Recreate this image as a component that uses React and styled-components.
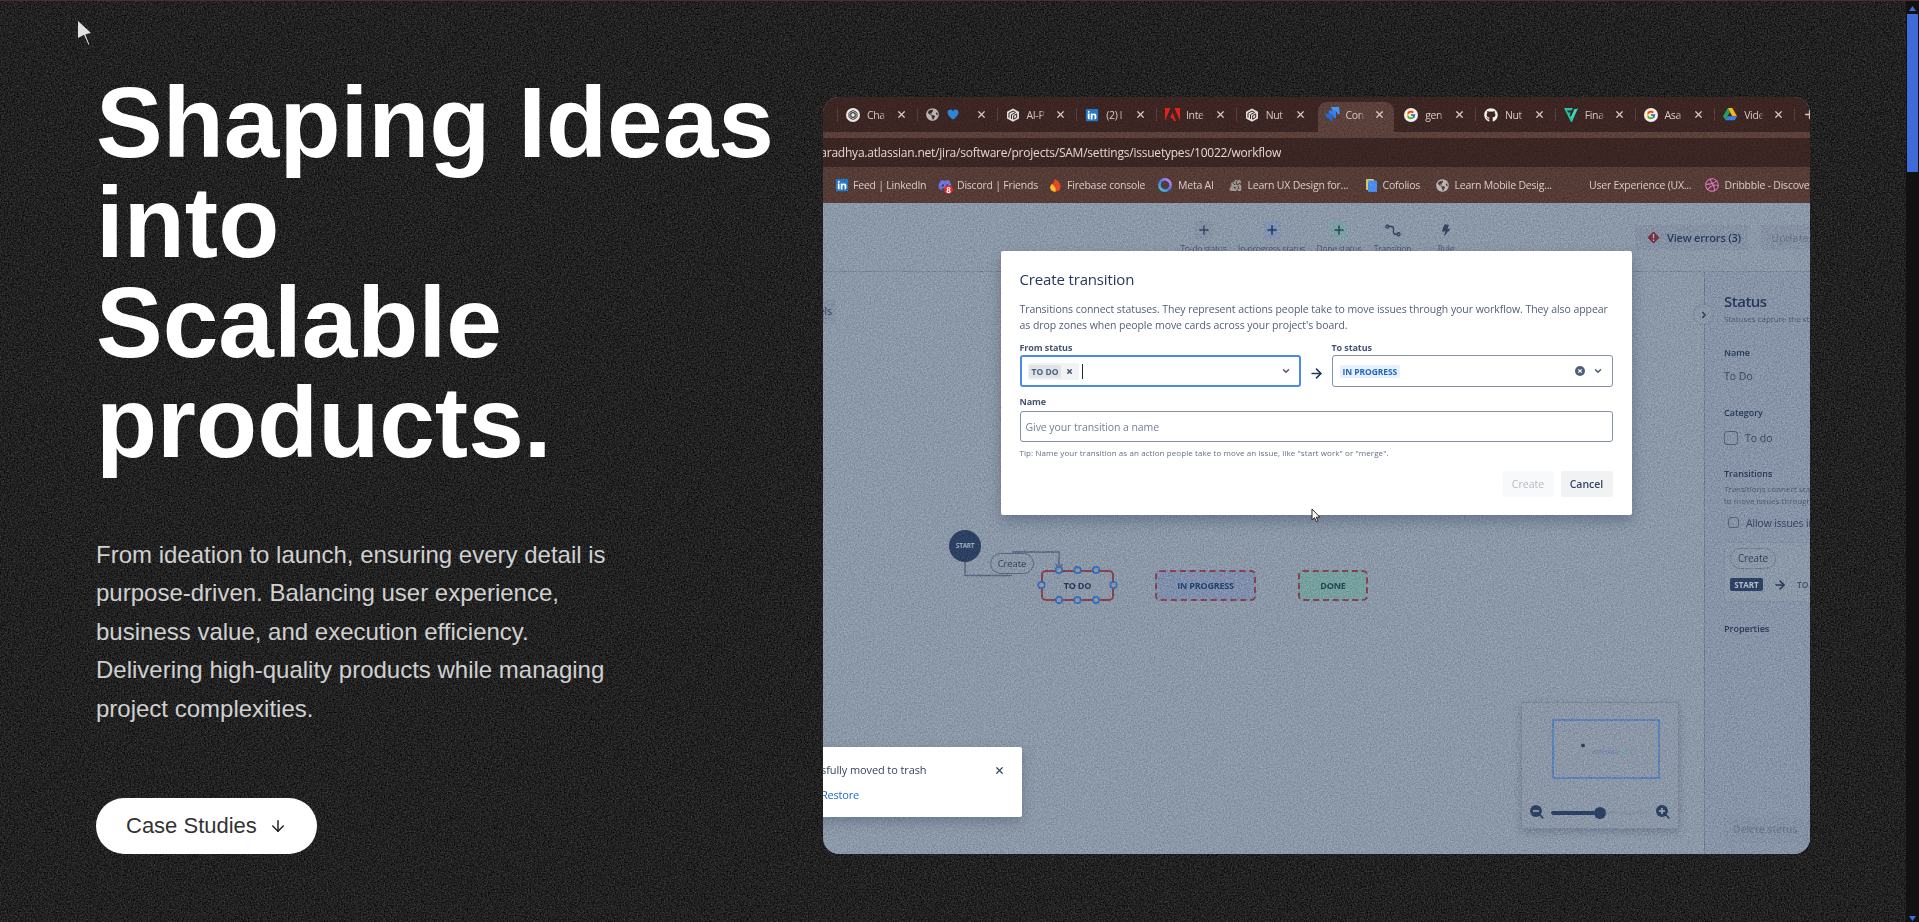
import React from "react";
import styled, { createGlobalStyle, css } from "styled-components";
import { FaLinkedin, FaGithub, FaGlobeAmericas, FaDribbble, FaDiscord } from "react-icons/fa";
import { FcGoogle } from "react-icons/fc";
import { ArrowDown, ArrowRight, ChevronDown, ChevronRight, X, Plus } from "lucide-react";

const GlobalStyle = createGlobalStyle`
  *, *::before, *::after { box-sizing: border-box; }
  body { margin: 0; background: #1f1f1f; overflow: hidden; }
  p, h1, h2, h3 { margin: 0; }
  svg { display: block; flex: none; }
`;

const ui = `"Open Sans", "Noto Sans", sans-serif`;

/* ---------- page ---------- */

const Page = styled.div`
  position: relative;
  display: flex;
  width: 100vw;
  height: 922px;
  background: #1f1f1f;
  font-family: "Liberation Sans", Arial, sans-serif;
`;

const Hero = styled.main`
  position: relative;
  isolation: isolate;
  flex: 1;
  display: flex;
  padding: 70px 0 0 96px;
  background: #1f1f1f;
  border-top: 1px solid #4a2e2b;
`;

const Copy = styled.section`
  width: 727px;
  display: flex;
  flex-direction: column;
  align-items: flex-start;
`;

const Heading = styled.h1`
  padding-top: 1px;
  font-size: 100px;
  line-height: 100px;
  font-weight: 700;
  color: #fff;
  white-space: nowrap;
`;

const Lead = styled.p`
  margin-top: 64px;
  font-size: 24px;
  line-height: 38.4px;
  color: #d0d0d0;
  white-space: nowrap;
`;

const CaseButton = styled.a`
  margin-top: 70px;
  display: flex;
  align-items: center;
  gap: 12px;
  width: 221px;
  height: 56px;
  padding-left: 30px;
  border-radius: 28px;
  background: #fff;
  color: #333;
  font-size: 22px;
`;

const GrainLayer = styled.svg`
  position: absolute;
  inset: 0;
  z-index: ${(p) => (p.$blend ? "auto" : -1)};
  width: 100%;
  height: 100%;
  mix-blend-mode: ${(p) => p.$blend || "normal"};
  opacity: ${(p) => p.$opacity};
  pointer-events: none;
`;

const Pointer = styled.svg`
  position: absolute;
  left: ${(p) => p.$x}px;
  top: ${(p) => p.$y}px;
`;

const Scrollbar = styled.aside`
  width: 13px;
  height: 922px;
  background: #111;
  border-top: 1px solid #4a2e2b;
  display: flex;
  flex-direction: column;
  align-items: center;
`;

const ScrollArrow = styled.svg`
  width: 7px;
  height: 5px;
  margin: ${(p) => (p.$end ? "auto 0 1px" : "5px 0 3px")};
`;

const Thumb = styled.div`
  width: 11px;
  height: 158px;
  background: #3f6bd8;
`;

/* ---------- showcase frame ---------- */

const Frame = styled.section`
  position: relative;
  isolation: isolate;
  width: 987px;
  height: 757px;
  margin-top: 26px;
  border-radius: 16px;
  overflow: hidden;
  display: flex;
  flex-direction: column;
  background: #8b98a8;
  font-family: ${ui};
`;

const TabBar = styled.div`
  display: flex;
  height: 35px;
  flex: none;
  padding-left: 14px;
  background: #3b2522;
`;

const TabItem = styled.div`
  position: relative;
  flex: none;
  width: 79.75px;
  display: flex;
  align-items: center;
  padding: 0 10px 0 9px;
  color: #dcc9c5;
  font-size: 10.5px;
  ${(p) =>
    p.$active &&
    css`
      margin-top: 5px;
      padding-bottom: 5px;
      &::after {
        content: "";
        position: absolute;
        z-index: 0;
        inset: 0 1px 0 2px;
        background: #5a403b;
        border-radius: 9px 9px 0 0;
      }
    `}
  &::before {
    content: "";
    position: absolute;
    left: 0;
    top: 11px;
    width: 1px;
    height: 13px;
    background: ${(p) => (p.$divider ? "#5a403c" : "transparent")};
  }
  & > * { position: relative; z-index: 1; }
`;

const TabIcon = styled.span`
  width: 21px;
  display: flex;
`;

const TabTitle = styled.span`
  width: 20px;
  margin-right: 9px;
  overflow: hidden;
  white-space: nowrap;
  letter-spacing: -0.3px;
  -webkit-mask-image: linear-gradient(90deg, #000 70%, transparent);
  mask-image: linear-gradient(90deg, #000 70%, transparent);
`;

const AddressBar = styled.div`
  height: 35px;
  flex: none;
  border-top: 6px solid #5a403b;
  background: #3b2522;
  width: 100%;
  display: flex;
  align-items: center;
`;

const Address = styled.div`
  width: 458px;
  display: flex;
  justify-content: flex-end;
  overflow: hidden;
  white-space: nowrap;
  font-size: 12px;
  letter-spacing: -0.22px;
  color: #e3d6d3;
  padding-top: 6px;
  height: 29px;
`;

const Bookmarks = styled.div`
  height: 36px;
  flex: none;
  display: flex;
  align-items: center;
  padding-left: 12px;
  background: #553b36;
  overflow: hidden;
`;

const Bookmark = styled.div`
  flex: none;
  width: ${(p) => p.$w}px;
  display: flex;
  align-items: center;
  color: #dacbc8;
  font-size: 10.5px;
  letter-spacing: ${(p) => p.$ls ?? -0.22}px;
  white-space: nowrap;
`;

const BookmarkIcon = styled.span`
  position: relative;
  width: ${(p) => p.$w}px;
  display: flex;
`;

const NoticeDot = styled.i`
  position: absolute;
  right: 4px;
  bottom: -2px;
  width: 9px;
  height: 9px;
  border-radius: 5px;
  background: #d32f2f;
  color: #fff;
  font: 700 8px/9px ${ui};
  text-align: center;
`;

/* ---------- workflow editor ---------- */

const Editor = styled.div`
  position: relative;
  flex: 1;
  display: flex;
  flex-direction: column;
  min-height: 0;
`;

const Toolbar = styled.div`
  position: relative;
  height: 69px;
  flex: none;
  border-bottom: 1px solid #7a8798;
  display: flex;
  padding-top: 18px;
  overflow: hidden;
`;

const Tools = styled.div`
  flex: none;
  display: flex;
  gap: 10px;
  margin-left: 357px;
  width: 455px;
`;

const Tool = styled.div`
  flex: none;
  width: ${(p) => p.$w}px;
  display: flex;
  flex-direction: column;
  align-items: center;
  gap: 4px;
  font-size: 8.5px;
  line-height: 12px;
  letter-spacing: -0.25px;
  white-space: nowrap;
  color: #4a5874;
`;

const ToolIcon = styled.span`
  display: grid;
  place-items: center;
  width: 18px;
  height: 18px;
  border-radius: 3px;
  background: ${(p) => p.$bg || "transparent"};
  color: ${(p) => p.$color || "#34435f"};
`;

const ToolbarButton = styled.div`
  flex: none;
  margin-top: 4px;
  width: ${(p) => p.$w}px;
  height: 25px;
  margin-right: 13px;
  padding-left: ${(p) => p.$pad}px;
  display: flex;
  align-items: center;
  gap: 7px;
  border-radius: 2px;
  background: #8591a3;
  color: ${(p) => (p.$muted ? "#6c788c" : "#253858")};
  font-size: 11px;
  font-weight: 600;
  letter-spacing: -0.2px;
  white-space: nowrap;
`;

const Workspace = styled.div`
  flex: 1;
  display: flex;
  min-height: 0;
`;

const Canvas = styled.div`
  position: relative;
  flex: 1;
`;

const LabelsButton = styled.div`
  position: absolute;
  left: -30px;
  top: 27px;
  width: 43px;
  height: 25px;
  padding-right: 4px;
  border-radius: 2px;
  background: #8591a3;
  color: #34435f;
  font-size: 10.5px;
  line-height: 24px;
  text-align: right;
`;

const Edges = styled.svg`
  position: absolute;
  left: 0;
  top: 0;
`;

const Node = styled.div`
  position: absolute;
  left: ${(p) => p.$x}px;
  top: ${(p) => p.$y}px;
  width: ${(p) => p.$w}px;
  height: 31px;
  border: 2px ${(p) => (p.$selected ? "solid" : "dashed")} #86414c;
  border-radius: 5px;
  background: ${(p) => p.$bg || "transparent"};
  color: ${(p) => p.$color || "#253858"};
  display: grid;
  place-items: center;
  font-size: 9px;
  font-weight: 700;
  letter-spacing: -0.2px;
`;

const StartNode = styled.div`
  position: absolute;
  left: 126px;
  top: 257.5px;
  width: 32px;
  height: 32px;
  border-radius: 50%;
  background: #2c4062;
  color: #b3bfce;
  display: grid;
  place-items: center;
  font-size: 6.5px;
  font-weight: 600;
  letter-spacing: -0.2px;
`;

const Pill = styled.div`
  width: ${(p) => p.$w}px;
  height: ${(p) => p.$h}px;
  border: ${(p) => p.$b}px solid ${(p) => p.$line};
  border-radius: 11px;
  display: grid;
  place-items: center;
  font-size: ${(p) => p.$size}px;
  letter-spacing: -0.1px;
  color: #2f3f5c;
  background: #8b98a8;
`;

const PillNode = styled(Pill)`
  position: absolute;
  left: 167px;
  top: 281px;
`;

const Minimap = styled.div`
  position: absolute;
  left: 698px;
  top: 430px;
  width: 158px;
  height: 127px;
  background: #8b97a7;
  border: 1px solid #7a8799;
  box-shadow: 0 3px 7px rgba(60, 75, 100, 0.35);
  display: flex;
  flex-direction: column;
  padding: 16px 8px 9px 30px;
`;

const Viewport = styled.div`
  width: 108px;
  height: 60px;
  border: 2px solid #5a82b8;
`;

const ZoomRow = styled.div`
  display: flex;
  align-items: center;
  margin: 26px 0 0 -22px;
`;

const Slider = styled.div`
  width: 98px;
  height: 4px;
  margin: 1px 7px 0;
  border-radius: 2px;
  background: linear-gradient(90deg, #2c4062 50%, #8592a3 50%);
  display: flex;
  align-items: center;
  justify-content: center;
  &::after {
    content: "";
    width: 12px;
    height: 12px;
    border-radius: 50%;
    background: #2c4062;
  }
`;

/* ---------- status panel ---------- */

const Panel = styled.div`
  position: relative;
  width: 106px;
  flex: none;
  border-left: 1px solid #6f7c92;
  background: #8793a7;
  padding: 17px 0 11px 19px;
  display: flex;
  flex-direction: column;
  align-items: flex-start;
  color: #253858;
  white-space: nowrap;
`;

const Collapse = styled.div`
  position: absolute;
  left: -12px;
  top: 32px;
  width: 21px;
  height: 21px;
  border-radius: 50%;
  border: 1px solid #78859a;
  background: #8b98a8;
  display: grid;
  place-items: center;
`;

const PanelTitle = styled.h2`
  font-size: 15px;
  line-height: 24px;
  font-weight: 600;
  letter-spacing: -0.5px;
`;

const PanelNote = styled.p`
  margin-top: ${(p) => p.$mt || 0}px;
  font-size: 8px;
  line-height: 12.5px;
  color: #4c5a74;
`;

const PanelLabel = styled.h3`
  margin-top: ${(p) => p.$mt}px;
  font-size: 9px;
  line-height: 14px;
  font-weight: 600;
`;

const PanelValue = styled.div`
  margin-top: ${(p) => p.$mt}px;
  padding-left: ${(p) => p.$pl || 0}px;
  display: flex;
  align-items: center;
  gap: 7px;
  font-size: 10.5px;
  line-height: 16px;
  letter-spacing: ${(p) => p.$ls || 0}px;
  color: #34435f;
`;

const Checkbox = styled.span`
  width: ${(p) => p.$s}px;
  height: ${(p) => p.$s}px;
  border: 1px solid #526078;
  border-radius: 3px;
`;

const TransitionCard = styled.div`
  margin-top: 11px;
  width: 110px;
  height: 60px;
  flex: none;
  padding: 5px 0 0 5px;
  border: 1px solid #7f8ca0;
  border-right: 0;
  border-radius: 3px;
  background: #8b98a8;
`;

const TransitionRow = styled.div`
  display: flex;
  align-items: center;
  gap: 10px;
  margin-top: 9px;
  color: #253858;
`;

const StartChip = styled.span`
  width: 33px;
  height: 13px;
  border-radius: 2px;
  background: #2c4062;
  color: #b3bfce;
  font-size: 8px;
  line-height: 13px;
  font-weight: 700;
  text-align: center;
`;

const TodoChip = styled.span`
  font-size: 8.5px;
  font-weight: 600;
  color: #3f4d68;
`;

const DeleteButton = styled.div`
  margin-top: auto;
  width: 90px;
  height: 26px;
  padding-left: 9px;
  border-radius: 2px;
  background: #8490a3;
  color: #6c788c;
  font-size: 10.5px;
  font-weight: 600;
  line-height: 25px;
  letter-spacing: -0.2px;
`;

/* ---------- overlays ---------- */

const Toast = styled.div`
  position: absolute;
  left: -40px;
  top: 650px;
  width: 238.5px;
  height: 70px;
  padding: 14px 17px 0 38px;
  border-radius: 2px;
  background: #fff;
  box-shadow: 0 5px 12px rgba(50, 65, 95, 0.35);
  font-size: 11px;
  line-height: 18px;
  letter-spacing: -0.1px;
  color: #344563;
  white-space: nowrap;
`;

const ToastRow = styled.div`
  display: flex;
  align-items: center;
  justify-content: space-between;
`;

const ToastAction = styled.div`
  margin-top: 7px;
  color: #1c69c9;
  letter-spacing: -0.2px;
  font-weight: 500;
`;

const Dialog = styled.div`
  position: absolute;
  left: 177.5px;
  top: 154px;
  width: 631px;
  height: 264px;
  padding: 16px 19px 18px;
  border-radius: 2px;
  background: #fff;
  box-shadow: 0 6px 14px rgba(50, 65, 95, 0.4);
  display: flex;
  flex-direction: column;
  color: #505f79;
  white-space: nowrap;
`;

const DialogTitle = styled.h2`
  font-size: 15px;
  line-height: 24px;
  font-weight: 500;
  letter-spacing: -0.15px;
  color: #253858;
`;

const DialogText = styled.p`
  margin-top: 11px;
  font-size: 10.5px;
  line-height: 15.7px;
  letter-spacing: -0.06px;
`;

const FieldLabel = styled.div`
  margin-top: ${(p) => p.$mt || 0}px;
  font-size: 9px;
  line-height: 14px;
  font-weight: 700;
  letter-spacing: -0.1px;
  color: #44546f;
`;

const StatusFields = styled.div`
  display: flex;
  align-items: flex-end;
  margin-top: 8px;
`;

const Field = styled.div`
  width: 281px;
`;

const Between = styled.div`
  width: 31px;
  height: 25px;
  display: flex;
  justify-content: center;
  color: #253858;
  align-self: flex-end;
  padding-top: 4px;
`;

const Select = styled.div`
  margin-top: 0;
  height: 32px;
  padding: 0 ${(p) => (p.$focused ? 8 : 9)}px 0 ${(p) => (p.$focused ? 6 : 7)}px;
  border: ${(p) => (p.$focused ? "2px solid #4a8be6" : "1px solid #8590a2")};
  border-radius: 3px;
  display: flex;
  align-items: center;
  color: #44546f;
`;

const Tag = styled.span`
  display: flex;
  align-items: center;
  height: 17px;
  width: 51px;
  border-radius: 2px;
  background: #f1f2f4;
  gap: 5px;
  padding-left: 1px;
`;

const Lozenge = styled.span`
  height: 13px;
  padding: 0 3px;
  border-radius: 2px;
  background: ${(p) => (p.$blue ? "#e6f1fd" : "#e0e3e8")};
  color: ${(p) => (p.$blue ? "#2267c4" : "#505f79")};
  font-size: 8.5px;
  line-height: 13px;
  font-weight: 700;
  letter-spacing: ${(p) => (p.$blue ? -0.08 : 0)}px;
`;

const Caret = styled.i`
  width: 1.5px;
  height: 15px;
  margin-left: 3px;
  background: #172b4d;
`;

const SelectIcons = styled.span`
  margin-left: auto;
  display: flex;
  align-items: center;
  gap: 8px;
`;

const TextInput = styled.div`
  margin-top: 2px;
  height: 31px;
  padding-left: 5px;
  border: 1px solid #8590a2;
  border-radius: 3px;
  font-size: 10.5px;
  line-height: 30px;
  letter-spacing: -0.07px;
  color: #758195;
`;

const Tip = styled.p`
  margin-top: 4px;
  font-size: 8px;
  line-height: 13px;
  letter-spacing: 0.09px;
  color: #626f86;
`;

const Actions = styled.div`
  margin-top: auto;
  display: flex;
  justify-content: flex-end;
  gap: 7px;
`;

const ActionButton = styled.div`
  width: ${(p) => (p.$disabled ? 51 : 52)}px;
  height: 26px;
  border-radius: 2px;
  background: ${(p) => (p.$disabled ? "#f8f9fa" : "#f1f2f4")};
  color: ${(p) => (p.$disabled ? "#b3b9c4" : "#344563")};
  display: grid;
  place-items: center;
  font-size: 10.5px;
  font-weight: ${(p) => (p.$disabled ? 400 : 600)};
`;

/* ---------- icons ---------- */

const Knot = () => (
  <svg width="14" height="14" viewBox="0 0 14 14">
    <circle cx="7" cy="7" r="7" fill="#ece7e6" />
    <g fill="none" stroke="#353535" strokeWidth=".8">
      {[0, 60, 120].map((a) => (
        <rect key={a} x="4.9" y="2.5" width="4.2" height="9" rx="2.1" transform={`rotate(${a} 7 7)`} />
      ))}
    </g>
  </svg>
);

const Cube = () => (
  <svg width="14" height="14" viewBox="0 0 14 14">
    <path d="M7 .5 13 3.8v6.6L7 13.7 1 10.4V3.8z" fill="#e4dedd" />
    <path d="M3 5.2 7 3l2.5 1.4L5.5 6.7v4.2M7.7 7.6l3-1.7v3.5l-3 1.8zM3 5.2v4.5" fill="none" stroke="#3b2522" strokeWidth="1" />
  </svg>
);

const InMark = styled(FaLinkedin)`
  background: radial-gradient(#fff 55%, transparent 60%);
  color: #2478c8;
`;

const LinkedIn = () => <InMark size={14} />;

const Globe = () => <FaGlobeAmericas size={13} color="#b9b5b4" />;

const Heart = () => (
  <svg width="12" height="11" viewBox="0 0 12 11">
    <path d="M6 10.5C2 7.5.6 5.4.6 3.4.6 1.7 1.8.6 3.2.6 4.4.6 5.4 1.2 6 2.3 6.600 1.200 7.600.600 8.800.600c1.400 0 2.600 1.100 2.600 2.800C11.400 5.400 10 7.500 6 10.500z" fill="#2b86d8" />
  </svg>
);

const Adobe = () => (
  <svg width="15" height="13" viewBox="0 0 15 13">
    <path d="M0 0h5.5L0 13zM15 0H9.5L15 13zM7.5 4.6 11 13H8.7l-1-2.7H5.1z" fill="#e3201b" />
  </svg>
);

const Jira = () => (
  <svg width="15" height="15" viewBox="0 0 15 15">
    <path d="M7 0h8v8c-2 0-2.8-1.2-2.8-2.7C9 5.3 8 3.5 7 0z" fill="#4a93f5" transform="rotate(-8 8 8)" />
    <path d="M3.5 3.5h7.5v7.8c-2 0-2.7-1.300-2.700-2.800C5 8.500 4 7 3.500 3.500z" fill="#347fe8" />
    <path d="M0 6.8h7.5v7.5c-2 0-2.7-1.200-2.700-2.700C1.600 11.600.6 10 0 6.800z" fill="#2468d2" />
  </svg>
);

const GoogleMark = () => (
  <svg width="14" height="14" viewBox="0 0 14 14">
    <circle cx="7" cy="7" r="7" fill="#f3efee" />
    <g transform="translate(2 2)">
      <FcGoogle size={10} />
    </g>
  </svg>
);

const Finch = () => (
  <svg width="14" height="14" viewBox="0 0 14 14">
    <path d="M0 0h9L7.6 2.5H3l1 2h2.7L5.6 7l2.2 4L13.5 0H14L8 14H7z" fill="#27c2a8" />
    <path d="M10.5 1h3L8 12l-1.3-2.7z" fill="#36d9bd" />
  </svg>
);

const Drive = () => (
  <svg width="14" height="13" viewBox="0 0 14 13">
    <path d="M4.7 0h4.6l4.7 8.2H9.3z" fill="#f2b91c" />
    <path d="M4.7 0 7 4 2.4 12 0 8.2z" fill="#21a25a" />
    <path d="M4.6 8.2H14L11.7 12.2H2.4z" fill="#3f7de8" />
  </svg>
);

const Flame = () => (
  <svg width="11" height="13" viewBox="0 0 11 13">
    <path d="M5 0c3 2 6 4.5 5.6 8.3C10.3 11 8.3 12.6 5.8 12.8 2 12.8 0 10.7.4 7.4L2 4l1.5 1.2C3.6 3 4 1.5 5 0z" fill="#e14a1f" />
    <path d="M2 4.8 5 8.5c1.2 2 .8 3.4.2 4.2C2 12.5 0 10.7.4 7.7z" fill="#f7c22b" />
  </svg>
);

const MetaRing = () => (
  <svg width="14" height="14" viewBox="0 0 14 14">
    <defs>
      <linearGradient id="ring" x1="1" y1="0" x2="0" y2="1">
        <stop offset="0" stopColor="#d98be8" />
        <stop offset=".5" stopColor="#4a6df0" />
        <stop offset="1" stopColor="#42d7d0" />
      </linearGradient>
    </defs>
    <circle cx="7" cy="7" r="5.6" fill="none" stroke="url(#ring)" strokeWidth="2.6" />
  </svg>
);

const Sketchy = () => (
  <svg width="13" height="12" viewBox="0 0 13 12">
    <path d="M0 11 2.5 6 2 4l3-1 1-2 3 .5 2-1L12 3l-1 2 1.5 2-.5 5H9l-.5-2L7 12H3z" fill="#9c9693" />
    <path d="M4 4l2 2M7 2l1 4 3-2M4 8l3 1M9 7l1 3" stroke="#4b3b38" fill="none" />
  </svg>
);

const Folio = () => (
  <svg width="11" height="13" viewBox="0 0 11 13">
    <rect width="8" height="11" rx="1" fill="#d9c36a" />
    <rect x="2" y="1.5" width="9" height="11.5" rx="1" fill="#4b8df0" />
  </svg>
);

const ClearIcon = () => (
  <svg width="10" height="10" viewBox="0 0 10 10">
    <circle cx="5" cy="5" r="5" fill="#505f79" />
    <path d="M3.3 3.3l3.4 3.4M6.7 3.3 3.3 6.7" stroke="#fff" strokeWidth="1.2" />
  </svg>
);

const ErrorIcon = () => (
  <svg width="13" height="13" viewBox="0 0 13 13">
    <rect x="2.1" y="2.1" width="8.8" height="8.8" rx="1.2" transform="rotate(45 6.5 6.5)" fill="#762f40" />
    <path d="M6.5 3v4.3M6.5 8.5V10" stroke="#b0b8c6" strokeWidth="1.4" />
  </svg>
);

const Connector = () => (
  <svg width="16" height="13" viewBox="0 0 16 13" fill="none" stroke="#34435f" strokeWidth="1.4">
    <circle cx="2.3" cy="2.5" r="1.5" />
    <circle cx="13.5" cy="10.3" r="1.5" />
    <path d="M4 2.5h2.5q2 0 2 2v3.8q0 2 2 2H12" />
  </svg>
);

const Bolt = () => (
  <svg width="10" height="13" viewBox="0 0 10 13">
    <path d="M3.5.5H8L6.5 4.7H9.5L3 12.5 4.3 7.5H.7z" fill="#34435f" />
  </svg>
);

const Magnifier = ({ plus }) => (
  <svg width="14" height="14" viewBox="0 0 14 14">
    <path d="M9 9l4.3 4.3" stroke="#2c4062" strokeWidth="1.7" />
    <circle cx="6" cy="6" r="6" fill="#2c4062" />
    <path d={plus ? "M3 6h6M6 3v6" : "M3 6h6"} stroke="#a3b0c0" strokeWidth="1.5" />
  </svg>
);

/* Monochrome film grain; `level` is the mean grey and `contrast` its spread. */
const Grain = ({ id, seed, level, contrast, opacity, blend }) => {
  const row = `${contrast} 0 0 0 ${level - contrast / 2}`;
  return (
    <GrainLayer $opacity={opacity} $blend={blend} aria-hidden="true">
      <filter id={id} x="0" y="0" width="100%" height="100%" colorInterpolationFilters="sRGB">
        <feTurbulence type="fractalNoise" baseFrequency="0.7" numOctaves="3" seed={seed} />
        <feColorMatrix values={`${row} ${row} ${row} 0 0 0 0 1`} />
      </filter>
      <rect width="100%" height="100%" filter={`url(#${id})`} />
    </GrainLayer>
  );
};

/* ---------- data ---------- */

const tabs = [
  { icon: <Knot />, title: "Cha" },
  { icon: <Globe />, title: <Heart /> },
  { icon: <Cube />, title: "AI-P" },
  { icon: <LinkedIn />, title: "(2) l" },
  { icon: <Adobe />, title: "Inte" },
  { icon: <Cube />, title: "Nut" },
  { icon: <Jira />, title: "Con", active: true },
  { icon: <GoogleMark />, title: "gen" },
  { icon: <FaGithub size={14} color="#f3efee" />, title: "Nut" },
  { icon: <Finch />, title: "Fina" },
  { icon: <GoogleMark />, title: "Asa" },
  { icon: <Drive />, title: "Vide" },
];

const bookmarks = [
  { w: 102.5, iw: 18, icon: <LinkedIn />, text: "Feed | LinkedIn" },
  {
    w: 112.5,
    iw: 19.5,
    icon: (
      <>
        <FaDiscord size={14} color="#6a74e8" />
        <NoticeDot>8</NoticeDot>
      </>
    ),
    text: "Discord | Friends",
  },
  { w: 108, iw: 17, icon: <Flame />, text: "Firebase console" },
  { w: 71, iw: 20, icon: <MetaRing />, text: "Meta AI" },
  { w: 137, iw: 18.5, icon: <Sketchy />, text: "Learn UX Design for..." },
  { w: 70, iw: 16.5, icon: <Folio />, text: "Cofolios" },
  { w: 135, iw: 18.5, icon: <Globe />, text: "Learn Mobile Desig..." },
  { w: 134, iw: 18, icon: null, text: "User Experience (UX..." },
  { w: 120, iw: 19.5, icon: <FaDribbble size={14} color="#e77cc4" />, text: "Dribbble - Discover" },
];

const handles = [
  [236, 298], [254.5, 298], [273, 298],
  [236, 328], [254.5, 328], [273, 328],
  [218.5, 313], [290.5, 313],
];

export default function App() {
  return (
    <>
      <GlobalStyle />
      <Page>
        <Hero>
          <Grain id="grain-page" seed={4} level={0.13} contrast={0.32} opacity={1} />
          <Copy>
            <Heading>
              Shaping Ideas
              <br />
              into
              <br />
              Scalable
              <br />
              products.
            </Heading>
            <Lead>
              From ideation to launch, ensuring every detail is
              <br />
              purpose-driven. Balancing user experience,
              <br />
              business value, and execution efficiency.
              <br />
              Delivering high-quality products while managing
              <br />
              project complexities.
            </Lead>
            <CaseButton>
              Case Studies
              <ArrowDown size={18} strokeWidth={2} color="#222" />
            </CaseButton>
          </Copy>

          <Frame>
            <TabBar>
              {tabs.map((t, i) => (
                <TabItem key={i} $active={t.active} $divider={i !== 6 && i !== 7}>
                  <TabIcon>{t.icon}</TabIcon>
                  <TabTitle>{t.title}</TabTitle>
                  <X size={11} strokeWidth={2.6} />
                </TabItem>
              ))}
              <TabItem $divider>
                <Plus size={13} strokeWidth={2.4} />
              </TabItem>
            </TabBar>
            <AddressBar>
              <Address>aradhya.atlassian.net/jira/software/projects/SAM/settings/issuetypes/10022/workflow</Address>
            </AddressBar>
            <Bookmarks>
              {bookmarks.map((b) => (
                <Bookmark key={b.text} $w={b.w}>
                  <BookmarkIcon $w={b.iw}>{b.icon}</BookmarkIcon>
                  {b.text}
                </Bookmark>
              ))}
            </Bookmarks>

            <Editor>
              <Toolbar>
                <Tools>
                  <Tool $w={47}>
                    <ToolIcon $bg="#8592a4"><Plus size={14} strokeWidth={2.4} /></ToolIcon>
                    To-do status
                  </Tool>
                  <Tool $w={69}>
                    <ToolIcon $bg="#8293ae" $color="#1d3b70"><Plus size={14} strokeWidth={2.8} /></ToolIcon>
                    In-progress status
                  </Tool>
                  <Tool $w={46}>
                    <ToolIcon $bg="#7e9ea4" $color="#1d4b52"><Plus size={14} strokeWidth={2.6} /></ToolIcon>
                    Done status
                  </Tool>
                  <Tool $w={41}>
                    <ToolIcon><Connector /></ToolIcon>
                    Transition
                  </Tool>
                  <Tool $w={46}>
                    <ToolIcon><Bolt /></ToolIcon>
                    Rule
                  </Tool>
                </Tools>
                <ToolbarButton $w={113} $pad={12}>
                  <ErrorIcon />
                  View errors (3)
                </ToolbarButton>
                <ToolbarButton $w={80} $pad={10} $muted>
                  Update
                </ToolbarButton>
              </Toolbar>

              <Workspace>
                <Canvas>
                  <LabelsButton>els</LabelsButton>
                  <Edges width="320" height="350" fill="none" stroke="#56657f" strokeWidth="1.5">
                    <path d="M142 288v15.5h47" />
                    <path d="M189 280h47v16" />
                    <path d="M232.5 292l3.5 4 3.5-4" />
                  </Edges>
                  <StartNode>START</StartNode>
                  <PillNode $w={44} $h={21} $b={1.5} $line="#56657f" $size={9.5}>Create</PillNode>
                  <Node $x={218} $y={297.5} $w={73} $selected>TO DO</Node>
                  <Node $x={332} $y={297.5} $w={101} $bg="#7f8fac" $color="#1f4270">IN PROGRESS</Node>
                  <Node $x={475} $y={297.5} $w={70} $bg="#769f9f" $color="#20484f">DONE</Node>
                  <Edges width="320" height="350" fill="#8b98a8" stroke="#356bb8" strokeWidth="1.7">
                    {handles.map(([x, y]) => (
                      <circle key={`${x}-${y}`} cx={x} cy={y} r="3.2" />
                    ))}
                  </Edges>
                  <Minimap>
                    <Viewport>
                      <svg width="104" height="56">
                        <circle cx="29" cy="24.5" r="2" fill="#2c4062" />
                        <rect x="38" y="29" width="12" height="4" fill="#808c9c" />
                        <rect x="51" y="29" width="13" height="4" fill="#7d8eac" />
                        <rect x="65" y="29" width="8" height="4" fill="#76a09f" />
                      </svg>
                    </Viewport>
                    <ZoomRow>
                      <Magnifier />
                      <Slider />
                      <Magnifier plus />
                    </ZoomRow>
                  </Minimap>
                </Canvas>

                <Panel>
                  <Collapse>
                    <ChevronRight size={10} strokeWidth={3.4} color="#253858" />
                  </Collapse>
                  <PanelTitle>Status</PanelTitle>
                  <PanelNote>Statuses capture the stages</PanelNote>
                  <PanelLabel $mt={20}>Name</PanelLabel>
                  <PanelValue $mt={8}>To Do</PanelValue>
                  <PanelLabel $mt={22}>Category</PanelLabel>
                  <PanelValue $mt={10}>
                    <Checkbox $s={14} />
                    To do
                  </PanelValue>
                  <PanelLabel $mt={21}>Transitions</PanelLabel>
                  <PanelNote $mt={2}>
                    Transitions connect statuses
                    <br />
                    to move issues through your
                  </PanelNote>
                  <PanelValue $mt={7} $pl={4} $ls={-0.15}>
                    <Checkbox $s={11} />
                    Allow issues in
                  </PanelValue>
                  <TransitionCard>
                    <Pill $w={46} $h={21} $b={1} $line="#6f7c90" $size={10}>Create</Pill>
                    <TransitionRow>
                      <StartChip>START</StartChip>
                      <ArrowRight size={14} strokeWidth={2.6} />
                      <TodoChip>TO DO</TodoChip>
                    </TransitionRow>
                  </TransitionCard>
                  <PanelLabel $mt={20}>Properties</PanelLabel>
                  <DeleteButton>Delete status</DeleteButton>
                </Panel>
              </Workspace>
            </Editor>

            <Grain id="grain-frame" seed={9} level={0.5} contrast={1} opacity={0.3} blend="overlay" />

            <Toast>
              <ToastRow>
                sfully moved to trash
                <X size={11} strokeWidth={2.6} />
              </ToastRow>
              <ToastAction>Restore</ToastAction>
            </Toast>

            <Dialog>
              <DialogTitle>Create transition</DialogTitle>
              <DialogText>
                Transitions connect statuses. They represent actions people take to move issues through your workflow. They also appear
                <br />
                as drop zones when people move cards across your project's board.
              </DialogText>
              <StatusFields>
                <Field>
                  <FieldLabel>From status</FieldLabel>
                  <Select $focused>
                    <Tag>
                      <Lozenge>TO DO</Lozenge>
                      <X size={7} strokeWidth={5} />
                    </Tag>
                    <Caret />
                    <SelectIcons>
                      <ChevronDown size={10} strokeWidth={3.4} />
                    </SelectIcons>
                  </Select>
                </Field>
                <Between>
                  <ArrowRight size={15} strokeWidth={2.6} />
                </Between>
                <Field>
                  <FieldLabel>To status</FieldLabel>
                  <Select>
                    <Lozenge $blue>IN PROGRESS</Lozenge>
                    <SelectIcons>
                      <ClearIcon />
                      <ChevronDown size={10} strokeWidth={3.4} />
                    </SelectIcons>
                  </Select>
                </Field>
              </StatusFields>
              <FieldLabel $mt={8}>Name</FieldLabel>
              <TextInput>Give your transition a name</TextInput>
              <Tip>Tip: Name your transition as an action people take to move an issue, like "start work" or "merge".</Tip>
              <Actions>
                <ActionButton $disabled>Create</ActionButton>
                <ActionButton>Cancel</ActionButton>
              </Actions>
            </Dialog>

            <Pointer $x={488} $y={411} width="10" height="15" viewBox="0 0 10 15">
              <path d="M1 1v11l2.6-2.3 1.7 4 1.7-.8-1.7-3.7H8.8z" fill="#fff" stroke="#222" strokeWidth="1" />
            </Pointer>
          </Frame>

          <Pointer $x={77} $y={18} width="15" height="27" viewBox="0 0 15 27">
            <path d="M1 2 14 14 8.3 15.2 12.3 25.5 11.5 25.8 7 15.8 1 19z" fill="#e2e2e2" />
          </Pointer>
        </Hero>

        <Scrollbar>
          <ScrollArrow viewBox="0 0 7 5">
            <path d="M3.5 0 7 5H0z" fill="#3f6bd8" />
          </ScrollArrow>
          <Thumb />
          <ScrollArrow $end viewBox="0 0 7 5">
            <path d="M3.5 5 7 0H0z" fill="#3f6bd8" />
          </ScrollArrow>
        </Scrollbar>
      </Page>
    </>
  );
}
